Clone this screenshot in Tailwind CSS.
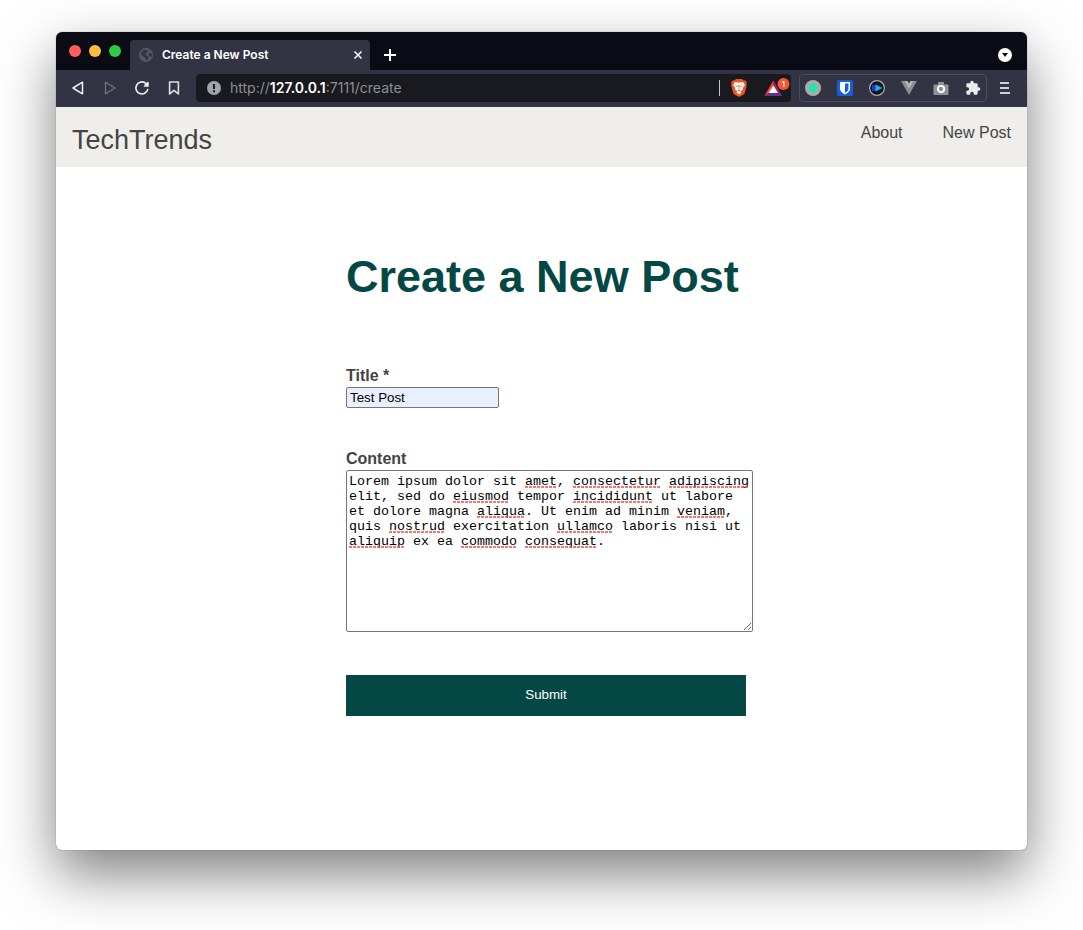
<!DOCTYPE html>
<html lang="en">
<head>
<meta charset="utf-8">
<title>Create a New Post</title>
<script src="https://cdn.jsdelivr.net/npm/@tailwindcss/browser@4"></script>
</head>
<body class="flex min-h-screen flex-col bg-white px-14 pt-8 pb-20 font-['Liberation_Sans',Arial,sans-serif] text-[#444444]">
<div class="flex flex-1 flex-col overflow-hidden rounded-md bg-white shadow-[0_0_1px_rgba(0,0,0,0.6),0_24px_56px_rgba(0,0,0,0.5)]">

  <!-- Tab strip -->
  <div class="flex h-[38px] shrink-0 items-end bg-[#0b0b15]">
    <div class="flex gap-2 pr-[9px] pb-[13px] pl-[13px]">
      <button aria-label="Close window" class="size-3 rounded-full bg-[#ff5f57]"></button>
      <button aria-label="Minimize window" class="size-3 rounded-full bg-[#ffbd3f]"></button>
      <button aria-label="Zoom window" class="size-3 rounded-full bg-[#2ecb44]"></button>
    </div>
    <div class="flex h-[30px] w-60 items-center rounded-t bg-[#323443] pr-[7px] pl-[9px] font-[Inter,sans-serif] text-xs font-semibold text-white">
      <svg class="mr-[9px] size-[14px] shrink-0" viewBox="0 0 14 14" aria-hidden="true"><circle cx="7" cy="7" r="7" fill="#54575e"/><path d="M2 4.500 5 2h3l1 1.500-2 1.500-1 2 2 .5 1.500 1.500-.5 2-2 1.500-.5-2.500-2-1.500L2 7zM10 5l2.500.5.5 2-1 2-1-1.500-1.500-1z" fill="#323443"/></svg>
      <span class="flex-1">Create a New Post</span>
      <button aria-label="Close tab" class="size-[10px]"><svg viewBox="0 0 10 10" class="size-[10px]" fill="none" stroke="#fff" stroke-width="1.600"><path d="m1.500 1.500 7 7m0-7-7 7"/></svg></button>
    </div>
    <button aria-label="New tab" class="mb-[9px] ml-[14px] size-3"><svg viewBox="0 0 12 12" class="size-3" fill="none" stroke="#fff" stroke-width="2"><path d="M6 0v12M0 6h12"/></svg></button>
    <button aria-label="Search tabs" class="mr-[15px] mb-2 ml-auto size-[14px]"><svg viewBox="0 0 14 14" class="size-[14px]"><circle cx="7" cy="7" r="7" fill="#fff"/><path d="M4 5h6l-3 4z" fill="#0b0b15"/></svg></button>
  </div>

  <!-- Toolbar -->
  <div class="flex h-[37px] shrink-0 items-center bg-[#323443] pr-[17px] pb-px pl-[14px]">
    <div class="flex gap-4 pr-[14px]">
      <button aria-label="Back" class="size-4"><svg viewBox="0 0 16 16" class="size-4" fill="none" stroke="#f0f0f2" stroke-width="1.500" stroke-linejoin="round"><path d="M12.500 2.200v11.600L3 8z"/></svg></button>
      <button aria-label="Forward" class="size-4"><svg viewBox="0 0 16 16" class="size-4" fill="none" stroke="#72747e" stroke-width="1.300" stroke-linejoin="round"><path d="M3.500 2.200v11.600L13 8z"/></svg></button>
      <button aria-label="Reload" class="size-4"><svg viewBox="0 0 16 16" class="size-4" fill="none" stroke="#f0f0f2" stroke-width="1.600" stroke-linecap="round"><path d="M13.700 9.500A6 6 0 1 1 11 2.800"/><circle cx="12.500" cy="4.300" r="1.700" fill="#f0f0f2" stroke="none"/><path d="M13.900 2.500v3.500h-3.400"/></svg></button>
      <button aria-label="Bookmark" class="size-4"><svg viewBox="0 0 16 16" class="size-4" fill="none" stroke="#e0e0e4" stroke-width="1.600" stroke-linejoin="round"><path d="M3.600 2h8.800v12L8 10.300 3.600 14z"/></svg></button>
    </div>
    <div class="flex h-7 flex-1 items-center rounded bg-[#181a20] pr-px pl-[11px]">
      <svg class="mr-[9px] size-[14px] shrink-0" viewBox="0 0 14 14" aria-hidden="true"><circle cx="7" cy="7" r="7" fill="#a0a4ae"/><path d="M6 3h2v5H6zM6 9.200h2v2H6z" fill="#181a20"/></svg>
      <div class="flex-1 font-[Inter,sans-serif] text-sm text-[#8c8e92]">http://<span class="font-semibold text-white">127.0.0.1</span>:7111/create</div>
      <div class="mr-[11px] h-4 w-px bg-[#c4c5c9]"></div>
      <button aria-label="Brave Shields" class="mr-4 h-[18px] w-4"><svg viewBox="0 0 16 18" class="h-[18px] w-4"><path d="M5 0h6l1.500 1.500L14 1.300 16 3.500l-.6 1.700.4 1.300-2 7.300c-.3 1-.8 1.500-1.600 2L8 18l-4.200-2.200c-.8-.5-1.300-1-1.600-2L.2 6.500l.4-1.300L0 3.500l2-2.200 1.500.2z" fill="#f4511e"/><path d="m4 3 2.200.5h3.600L12 3l2 3-2.400 3 .4 1.800L9.500 12l1 1.500L8 15.500l-2.500-2 1-1.500L4 10.800 4.400 9 2 6z" fill="#fff"/><path d="m4.200 6.200 2.600.8-.5 1.200zM11.800 6.200 9.200 7l.5 1.200zM7.400 6h1.200l-.3 4.500h-.6zM5.800 10.500l2.200.8 2.200-.8L8 12.500z" fill="#f4511e"/></svg></button>
      <button aria-label="Brave Rewards, 1 notification" class="h-6 w-[27px]"><svg viewBox="0 0 27 24" class="h-6 w-[27px]"><path d="M10.500 4.500 19 20H1.500z" fill="#662d91"/><path d="M10.500 4.500v5L5.500 17l-4 3z" fill="#ff4724"/><path d="M10.500 4.500 19 20l-4-3-4.500-7.500z" fill="#9e1f63"/><path d="m10.500 9.500 4.500 7.500H5.500z" fill="#fff"/><circle cx="20.500" cy="8" r="6" fill="#fb542b"/><text x="20.500" y="11" text-anchor="middle" fill="#fff" font-family="Inter, sans-serif" font-size="8" font-weight="600">1</text></svg></button>
    </div>
    <div class="ml-2 flex h-7 w-[188px] items-center justify-between rounded border border-[#4a4c5a] px-[5px]">
      <button aria-label="Recorder extension" class="size-4"><svg viewBox="0 0 16 16" class="size-4"><circle cx="8" cy="8" r="8" fill="#a9abac"/><circle cx="8" cy="8" r="4.300" fill="#1ee8b0"/></svg></button>
      <button aria-label="Password manager" class="size-4"><svg viewBox="0 0 16 16" class="size-4"><rect width="16" height="16" rx="2" fill="#175ddc"/><path d="M3 2h10v6.500c0 3-3 5-5 6-2-1-5-3-5-6z" fill="#fff"/><path d="M8 3.500h3.500v5c0 2-1.700 3.400-3.500 4.400z" fill="#175ddc"/></svg></button>
      <button aria-label="Video extension" class="size-4"><svg viewBox="0 0 16 16" class="size-4"><circle cx="8" cy="8" r="7.400" fill="#11141c" stroke="#aeb0b4" stroke-width="1.200"/><path d="M3 4.500 8.500 5.500v5L3 11.500z" fill="#2632d0"/><path d="m6.500 4.500 7 3.500-7 3.500z" fill="#16b4f2"/></svg></button>
      <button aria-label="Vue devtools" class="size-4"><svg viewBox="0 0 16 16" class="size-4"><path d="M0 1h4l4 7 4-7h4L8 15z" fill="#8c8e90"/><path d="M3.500 1h3L8 3.600 9.500 1h3L8 8.800z" fill="#b4b6b8"/></svg></button>
      <button aria-label="Screenshot" class="size-4"><svg viewBox="0 0 16 16" class="size-4"><path d="M5 4.500V2h6v2.500h3.500q1 0 1 1V14q0 1-1 1h-13q-1 0-1-1V5.500q0-1 1-1z" fill="#929395"/><circle cx="8" cy="9" r="3.100" fill="#8b8c8e" stroke="#fff" stroke-width="1.900"/></svg></button>
      <button aria-label="Extensions" class="size-4"><svg viewBox="0 0 24 24" class="size-4"><path d="M20.500 11H19V7a2 2 0 0 0-2-2h-4V3.500a2.500 2.500 0 0 0-5 0V5H4a2 2 0 0 0-2 2v3.800h1.500a2.700 2.700 0 0 1 0 5.400H2V20a2 2 0 0 0 2 2h3.800v-1.500a2.700 2.700 0 0 1 5.400 0V22H17a2 2 0 0 0 2-2v-4h1.500a2.500 2.500 0 0 0 0-5z" fill="#ececee"/></svg></button>
    </div>
    <button aria-label="Menu" class="ml-[13px] h-3 w-[10px]"><svg viewBox="0 0 10 12" class="h-3 w-[10px]" stroke="#d0d1d5" stroke-width="2"><path d="M0 1h9M0 6h9M0 11h10"/></svg></button>
  </div>

  <!-- Site header -->
  <header class="flex h-[60px] shrink-0 items-start justify-between bg-[#f0eeea] px-4 pt-4">
    <a href="#" class="text-[27px] leading-[34px]">TechTrends</a>
    <nav class="flex gap-10 text-base leading-5">
      <a href="#">About</a>
      <a href="#">New Post</a>
    </nav>
  </header>

  <main class="mx-auto w-[423px] pt-20 pl-4">
    <h1 class="text-[45px] leading-[60px] font-bold whitespace-nowrap text-[#044845]">Create a New Post</h1>
    <form class="flex flex-col items-start pt-[58px]">
      <label for="title" class="text-base leading-[22px] font-bold">Title *</label>
      <input id="title" type="text" value="Test Post" class="h-[21px] w-[153px] rounded-xs border border-[#767676] bg-[#e8f0fe] px-[3px] text-[10pt] leading-4 text-black">
      <label for="content" class="mt-10 text-base leading-[22px] font-bold">Content</label>
      <div class="relative w-full">
        <textarea id="content" spellcheck="false" class="block h-[162px] w-full rounded-xs border border-[#767676] bg-white px-[2px] py-[3px] font-['Liberation_Mono','Courier_New',monospace] text-[10pt] leading-[15px] text-black">Lorem ipsum dolor sit amet, consectetur adipiscing elit, sed do eiusmod tempor incididunt ut labore et dolore magna aliqua. Ut enim ad minim veniam, quis nostrud exercitation ullamco laboris nisi ut aliquip ex ea commodo consequat.</textarea>
        <!-- Spelling marks -->
        <svg class="pointer-events-none absolute top-1 left-[3px] h-[75px] w-[400px]" viewBox="0 0 400 75" fill="none" stroke="#f0554f" stroke-width="2" stroke-dasharray="3 1" stroke-opacity="0.8" aria-hidden="true"><path d="M176 13h32M224 13h88M320 13h80M104 28h56M224 28h80M128 43h48M328 43h48M40 58h56M208 58h56M0 73h56M112 73h56M176 73h72"/></svg>
      </div>
      <button type="submit" class="mt-[43px] h-[41px] w-[400px] bg-[#044845] pb-px text-[10pt] leading-4 text-white">Submit</button>
    </form>
  </main>
</div>
</body>
</html>
